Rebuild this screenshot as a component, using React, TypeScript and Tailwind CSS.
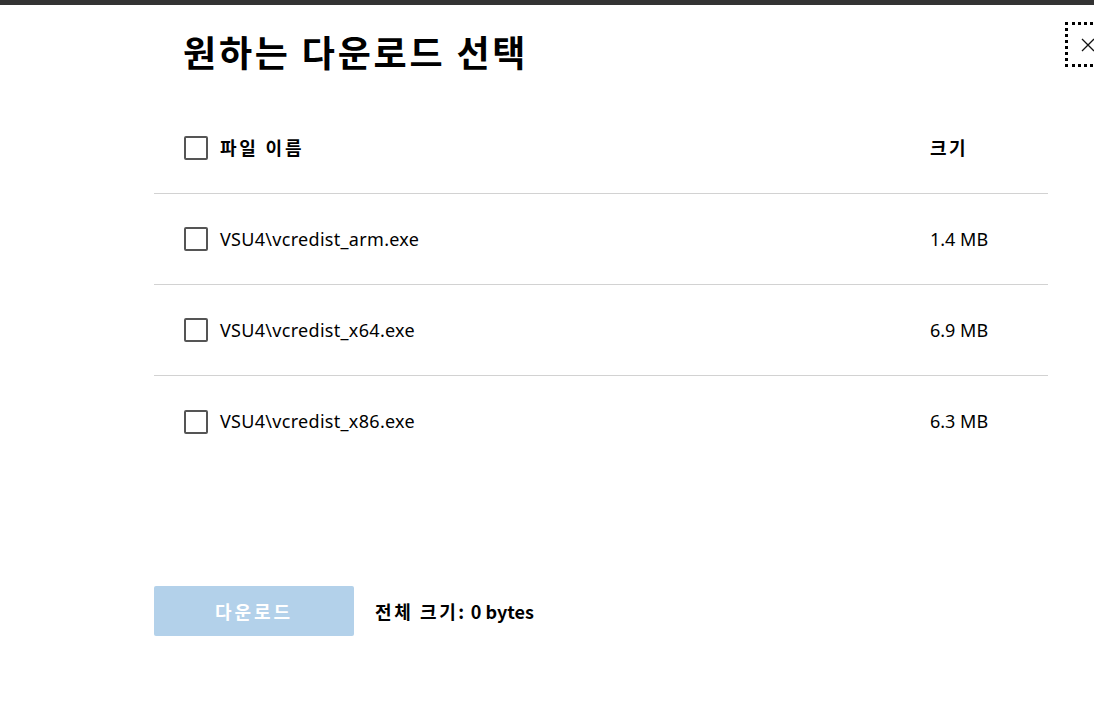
import React from "react";

const files = [
  { name: "VSU4\\vcredist_arm.exe", size: "1.4 MB" },
  { name: "VSU4\\vcredist_x64.exe", size: "6.9 MB" },
  { name: "VSU4\\vcredist_x86.exe", size: "6.3 MB" },
];

const Box = () => (
  <span className="inline-block w-[24px] h-[24px] border-2 border-[#555] rounded-[2px] bg-white shrink-0" />
);

const App = () => {
  return (
    <div className="w-[1094px] h-[726px] bg-white overflow-hidden font-['Noto_Sans','Noto_Sans_CJK_KR',sans-serif] text-black">
      <div className="h-[5px] bg-[#333]" />
      <div className="flex">
        <div className="w-[154px]" />
        <div className="w-[894px]">
          <h1 className="pl-[29px] pt-[22px] h-[97px] text-[36px] tracking-[2.8px] font-bold leading-[48px] font-['Noto_Sans_CJK_KR',sans-serif]">
            원하는 다운로드 선택
          </h1>
          <div className="flex items-center h-[92px] border-b border-[#d2d2d2] pl-[30px]">
            <Box />
            <span className="ml-[12px] flex-1 text-[18px] tracking-[2.8px] font-bold font-['Noto_Sans_CJK_KR',sans-serif]">파일 이름</span>
            <span className="w-[118px] text-[18px] tracking-[2.5px] font-bold font-['Noto_Sans_CJK_KR',sans-serif]">크기</span>
          </div>
          {files.map((f, i) => (
            <div
              key={f.name}
              className={`flex items-center h-[91px] pl-[30px] ${i < 2 ? "border-b border-[#d2d2d2]" : ""}`}
            >
              <Box />
              <span className="ml-[12px] flex-1 text-[18px] tracking-[0.3px]">{f.name}</span>
              <span className="w-[118px] text-[18px]">{f.size}</span>
            </div>
          ))}
          <div className="flex items-center mt-[119px]">
            <button className="w-[200px] h-[50px] bg-[#b3d1ea] rounded-[2px] text-white text-[18px] tracking-[3px] font-bold font-['Noto_Sans_CJK_KR',sans-serif]">
              다운로드
            </button>
            <span className="ml-[21px] text-[18px] font-semibold font-['Noto_Sans_CJK_KR',sans-serif]">
              <span className="tracking-[2.6px]">전체 크기:</span> 0 bytes
            </span>
          </div>
        </div>
        <div className="flex-1 relative">
          <div className="absolute left-[17px] top-[17px] w-[40px] h-[45px] border-[3px] border-dotted border-black flex items-center pl-[12px]">
            <svg width="16" height="16" viewBox="0 0 16 16" fill="none" stroke="#111" strokeWidth="1.3">
              <path d="M2 2 L14 14 M14 2 L2 14" />
            </svg>
          </div>
        </div>
      </div>
    </div>
  );
};

export default App;
